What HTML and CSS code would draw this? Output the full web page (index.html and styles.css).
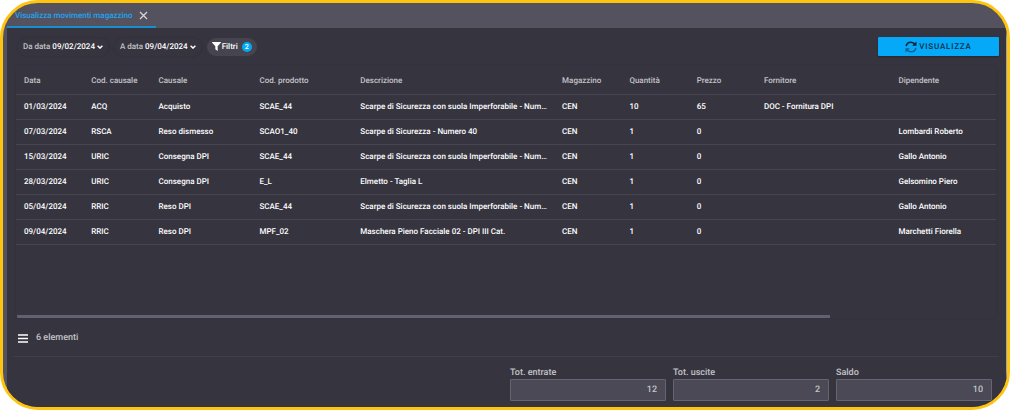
FILE: index.html
```
<!DOCTYPE html>
<html lang="it">
<head>
    <meta charset="UTF-8">
    <meta name="viewport" content="width=device-width, initial-scale=1.0">
    <title>Visualizza movimenti magazzino</title>
    <link rel="stylesheet" href="styles.css">
</head>
<body>
    <div class="window">
        <nav class="tab-bar">
            <div class="tab active">
                <a href="#movimenti">Visualizza movimenti magazzino</a>
                <button class="tab-close" aria-label="Chiudi">
                    <svg width="9" height="9" viewBox="0 0 9 9"><path d="M1 1l7 7M8 1L1 8" stroke="currentColor" stroke-width="1.3" fill="none"/></svg>
                </button>
            </div>
        </nav>

        <main class="panel" id="movimenti">
            <div class="toolbar">
                <button class="chip">Da data <b>09/02/2024</b>
                    <svg width="6" height="4" viewBox="0 0 6 4"><path d="M0.6 0.7L3 3.1 5.4 0.7" stroke="currentColor" stroke-width="1.4" fill="none"/></svg>
                </button>
                <button class="chip">A data <b>09/04/2024</b>
                    <svg width="6" height="4" viewBox="0 0 6 4"><path d="M0.6 0.7L3 3.1 5.4 0.7" stroke="currentColor" stroke-width="1.4" fill="none"/></svg>
                </button>
                <button class="chip filter">
                    <svg width="9" height="9" viewBox="0 0 9 9"><path d="M0.2 0h8.6q.3.4 0 .8L5.7 4.3V9L3.3 7.2V4.3L.2.8Q-.1.4.2 0z" fill="currentColor"/></svg>
                    <span>Filtri</span>
                    <span class="badge">2</span>
                </button>
                <button class="btn-primary">
                    <svg width="12" height="12" viewBox="0 0 12 12" fill="none" stroke-width="1.5">
                        <path d="M1.2 5.2C1.6 2.6 3.6 1.2 6 1.2c1.7 0 3.1.8 4 2.2" stroke="#0b2230"/>
                        <path d="M11.5.5v4.3H7.2z" fill="#0b2230"/>
                        <path d="M10.8 6.8C10.4 9.4 8.4 10.8 6 10.8c-1.7 0-3.1-.8-4-2.2" stroke="#05628f"/>
                        <path d="M.5 11.5V7.2h4.3z" fill="#05628f"/>
                    </svg>
                    VISUALIZZA
                </button>
            </div>

            <div class="grid">
                <table>
                    <colgroup>
                        <col class="w2"><col class="w2"><col class="w3"><col class="w3"><col class="w6">
                        <col class="w2"><col class="w2"><col class="w2"><col class="w4"><col>
                    </colgroup>
                    <thead>
                        <tr>
                            <th>Data</th>
                            <th>Cod. causale</th>
                            <th>Causale</th>
                            <th>Cod. prodotto</th>
                            <th>Descrizione</th>
                            <th>Magazzino</th>
                            <th>Quantità</th>
                            <th>Prezzo</th>
                            <th>Fornitore</th>
                            <th>Dipendente</th>
                        </tr>
                    </thead>
                    <tbody>
                        <tr><td>01/03/2024</td><td>ACQ</td><td>Acquisto</td><td>SCAE_44</td><td>Scarpe di Sicurezza con suola Imperforabile - Num…</td><td>CEN</td><td>10</td><td>65</td><td>DOC - Fornitura DPI</td><td></td></tr>
                        <tr><td>07/03/2024</td><td>RSCA</td><td>Reso dismesso</td><td>SCAO1_40</td><td>Scarpe di Sicurezza - Numero 40</td><td>CEN</td><td>1</td><td>0</td><td></td><td>Lombardi Roberto</td></tr>
                        <tr><td>15/03/2024</td><td>URIC</td><td>Consegna DPI</td><td>SCAE_44</td><td>Scarpe di Sicurezza con suola Imperforabile - Num…</td><td>CEN</td><td>1</td><td>0</td><td></td><td>Gallo Antonio</td></tr>
                        <tr><td>28/03/2024</td><td>URIC</td><td>Consegna DPI</td><td>E_L</td><td>Elmetto - Taglia L</td><td>CEN</td><td>1</td><td>0</td><td></td><td>Gelsomino Piero</td></tr>
                        <tr><td>05/04/2024</td><td>RRIC</td><td>Reso DPI</td><td>SCAE_44</td><td>Scarpe di Sicurezza con suola Imperforabile - Num…</td><td>CEN</td><td>1</td><td>0</td><td></td><td>Gallo Antonio</td></tr>
                        <tr><td>09/04/2024</td><td>RRIC</td><td>Reso DPI</td><td>MPF_02</td><td>Maschera Pieno Facciale 02 - DPI III Cat.</td><td>CEN</td><td>1</td><td>0</td><td></td><td>Marchetti Fiorella</td></tr>
                    </tbody>
                </table>
                <div class="scroll-thumb"></div>
            </div>

            <div class="grid-footer">
                <button class="menu" aria-label="Menu">
                    <svg width="10" height="9" viewBox="0 0 10 9"><path d="M0 1h10M0 4.5h10M0 8h10" stroke="currentColor" stroke-width="1.4"/></svg>
                </button>
                <span>6 elementi</span>
            </div>

            <div class="totals">
                <div class="field">
                    <label for="entrate">Tot. entrate</label>
                    <input type="text" id="entrate" value="12" readonly>
                </div>
                <div class="field">
                    <label for="uscite">Tot. uscite</label>
                    <input type="text" id="uscite" value="2" readonly>
                </div>
                <div class="field">
                    <label for="saldo">Saldo</label>
                    <input type="text" id="saldo" value="10" readonly>
                </div>
            </div>
        </main>
    </div>
</body>
</html>
```

FILE: styles.css
```
:root {
    --accent: #03a9f4;
    --frame: #ffc40d;
    --bar: #53525e;
    --background: #36353f;
    --line: #474650;
    --text: #ffffff;
    --muted: #c3c3c8;
}
* {
    box-sizing: border-box;
}
body {
    margin: 0;
    background-color: white;
    font-family: Roboto, "Liberation Sans", sans-serif;
    font-size: 8px;
    line-height: 12px;
    font-weight: 500;
    text-rendering: geometricPrecision;
    color: var(--text);
}
button, input {
    font: inherit;
    color: inherit;
    text-rendering: inherit;
}
button {
    display: flex;
    align-items: center;
    border: none;
    padding: 0;
    background: none;
    cursor: pointer;
}
.window {
    display: flex;
    flex-direction: column;
    min-height: 100vh;
    border: 3px solid var(--frame);
    border-radius: 38px;
    overflow: hidden;
    background-color: var(--bar);
}
.tab-bar {
    display: flex;
    height: 25px;
    padding-left: 4px;
}
.tab {
    display: flex;
    align-items: center;
    gap: 6px;
    padding: 2px 8px 0;
    border-bottom: 2px solid transparent;
}
.tab.active {
    border-color: #1a8fd0;
}
.tab a {
    color: #1ea5f3;
    text-decoration: none;
}
.tab-close {
    color: #d5d5d8;
}
.panel {
    flex: 1;
    display: flex;
    flex-direction: column;
    margin-left: 4px;
    padding: 9px 7px 6px 6px;
    border-right: 1px solid #a3a2a6;
    background-color: var(--background);
}
.toolbar {
    display: flex;
    align-items: center;
    gap: 5px;
    padding-left: 4px;
}
.chip {
    gap: 2px;
    height: 18px;
    padding: 0 6px;
    border-radius: 9px;
    color: var(--muted);
    box-shadow: 0 0 2px rgba(0, 0, 0, 0.2);
}
.chip b {
    font-weight: 500;
}
.chip b, .chip svg {
    color: white;
}
.chip.filter {
    gap: 1px;
    padding: 0 5px;
    color: var(--text);
    background-color: #45444f;
    box-shadow: none;
}
.badge {
    width: 10px;
    height: 10px;
    margin-left: 3px;
    border-radius: 50%;
    background-color: var(--accent);
    font-size: 7px;
    line-height: 10px;
    text-align: center;
}
.btn-primary {
    justify-content: center;
    gap: 2px;
    width: 121px;
    height: 19px;
    margin-left: auto;
    border-radius: 1px;
    background-color: #06a9f7;
    color: #0b2f45;
    letter-spacing: 0.1em;
    box-shadow: 0 1px 2px rgba(0, 0, 0, 0.3);
}
.grid {
    flex: 1;
    display: flex;
    flex-direction: column;
    justify-content: space-between;
    margin: 10px 3px 0;
    border-radius: 2px;
    overflow: hidden;
    box-shadow: 0 0 2px rgba(0, 0, 0, 0.15);
}
table {
    width: 120%;
    table-layout: fixed;
    border-collapse: collapse;
}
.w2 {
    width: 5.72%;
}
.w3 {
    width: 8.58%;
}
.w4 {
    width: 11.44%;
}
.w6 {
    width: 17.16%;
}
th, td {
    height: 25px;
    padding: 0 4px 0 8px;
    border-bottom: 1px solid var(--line);
    text-align: left;
    white-space: nowrap;
    overflow: hidden;
    text-overflow: ellipsis;
}
th {
    height: 28px;
    padding-top: 2px;
    font-weight: 500;
    color: var(--muted);
}
.scroll-thumb {
    width: 83%;
    height: 3px;
    margin-left: 1px;
    background-color: #62616f;
}
.grid-footer {
    display: flex;
    align-items: center;
    gap: 8px;
    height: 39px;
    padding: 2px 0 0 5px;
    border-bottom: 1px solid #3f3e49;
    font-size: 9px;
    color: var(--muted);
}
.menu {
    color: white;
}
.totals {
    display: flex;
    justify-content: flex-end;
    gap: 7px;
    padding: 10px 7px 0 0;
    font-size: 9px;
}
.field {
    width: 156px;
}
.field label {
    display: block;
    color: var(--muted);
}
.field input {
    display: block;
    width: 100%;
    height: 22px;
    padding: 0 8px;
    border: 1px solid #65646f;
    border-radius: 1px;
    background-color: #4a4955;
    color: #c4c4c9;
    text-align: right;
}
```
